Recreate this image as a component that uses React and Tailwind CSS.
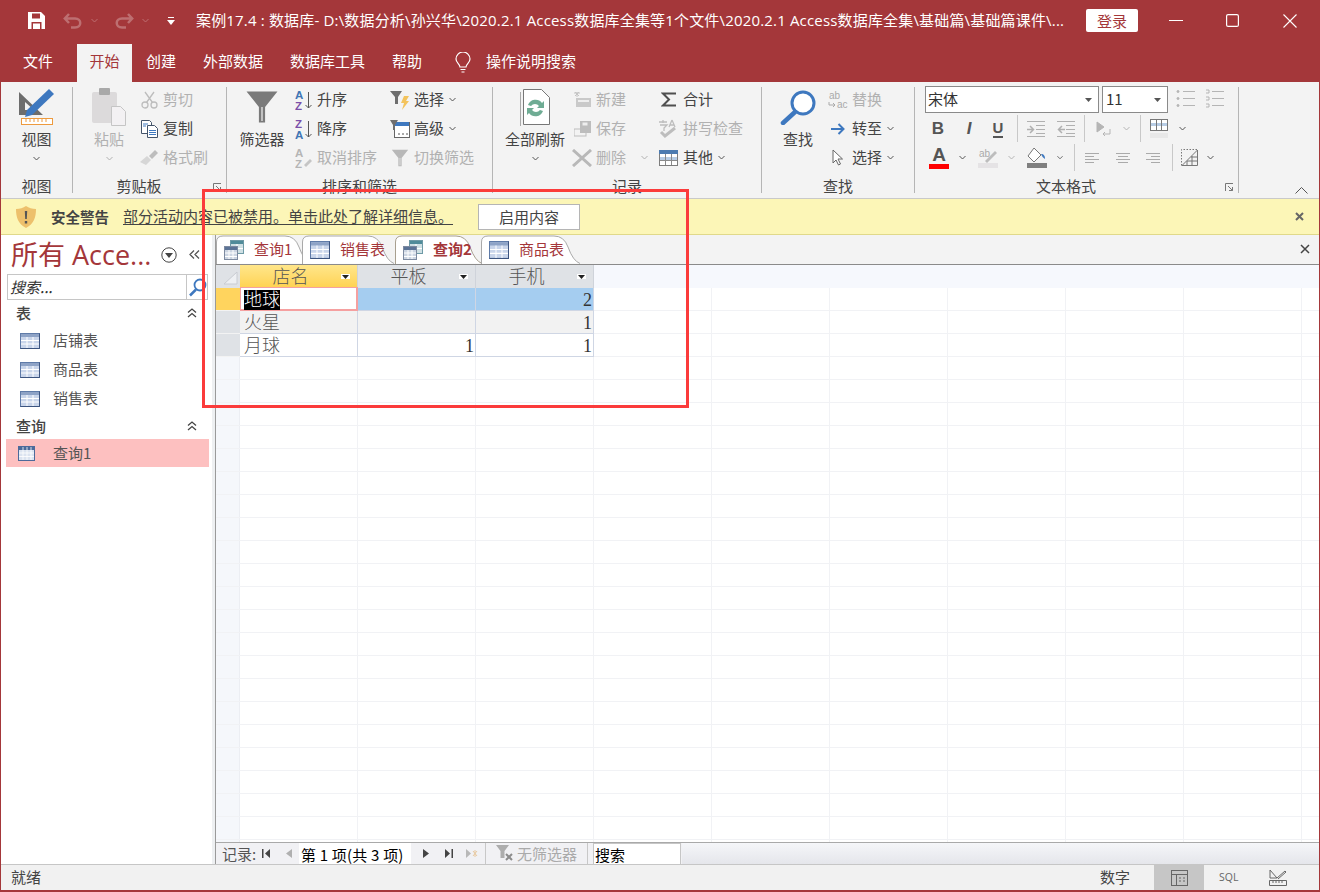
import React from 'react';

const RED = '#a4373a';

const Chev = ({ color = '#555' }) => (
  <svg width="7" height="5" viewBox="0 0 7 5" fill="none" stroke={color} strokeWidth="1"><path d="M.5 1 3.5 4 6.5 1" /></svg>
);

const TableIcon = ({ w = 20, h = 16 }) => (
  <svg width={w} height={h} viewBox="0 0 20 16" preserveAspectRatio="none">
    <rect x=".5" y=".5" width="19" height="15" fill="#c9d5ea" stroke="#5f7ba8" />
    <rect x="1" y="1" width="18" height="3" fill="#8ea3c6" />
    <path d="M1 7.500h18M1 11h18M7 4v11M13 4v11" stroke="#fff" strokeWidth="1" />
    <path d="M.5 15.500h19v-15" fill="none" stroke="#3d5580" />
  </svg>
);

const QueryNavIcon = () => (
  <svg width="17" height="15" viewBox="0 0 17 15">
    <rect x=".5" y=".5" width="16" height="14" fill="#dbe3f0" stroke="#4d6a9a" />
    <rect x="1" y="1" width="15" height="3" fill="#4d6a9a" />
    <path d="M1 7h15M1 10.500h15M5 1v13M9 1v13M13 1v13" stroke="#fff" strokeWidth=".8" />
  </svg>
);

const QueryIcon = () => (
  <svg width="20" height="20" viewBox="0 0 20 20">
    <rect x="6.500" y=".5" width="13" height="13" fill="#cfe0e4" stroke="#6e9aa6" />
    <rect x="7" y="1" width="12" height="3" fill="#4f8b99" />
    <path d="M13 4v9M7 8.500h12" stroke="#fff" />
    <rect x=".5" y="6.500" width="13" height="13" fill="#ccd5e2" stroke="#7d8aa0" />
    <rect x="1" y="7" width="12" height="3" fill="#5b7396" />
    <path d="M1 13h12M1 16.500h12M5 10v9M9 10v9" stroke="#fff" />
  </svg>
);

const Funnel = ({ size = 22, color = '#7a7a7a' }) => (
  <svg width={size} height={size} viewBox="0 0 22 22">
    <path d="M1 1h20L13 11v10H9V11Z" fill={color} />
    <path d="M11 11v9" stroke="#fff" strokeWidth="1" opacity=".7" />
  </svg>
);

const AzIcon = ({ down, gray }) => (
  <svg width="18" height="20" viewBox="0 0 18 20" fontFamily="Liberation Sans" fontSize="11.500" fontWeight="700">
    <text x="0" y="9" fill={gray ? '#b5b5b5' : down ? '#7a4fa8' : '#3f76b4'}>{down ? 'Z' : 'A'}</text>
    <text x="0" y="19.500" fill={gray ? '#b5b5b5' : down ? '#3f76b4' : '#7a4fa8'}>{down ? 'A' : 'Z'}</text>
    {gray
      ? <path d="M9 17l6-6 2 2-6 6Z" fill="#c5c5c5" />
      : <path d="M13.500 2v16M10.500 15l3 3 3-3" fill="none" stroke="#555" strokeWidth="1" />}
  </svg>
);

const ListLines = ({ kind }) => (
  <svg width="16" height="14" viewBox="0 0 16 14" stroke="#aaa" fill="none">
    {kind === 'left' && <path d="M0 2.500h14M0 5.500h9M0 8.500h14M0 11.500h9" />}
    {kind === 'center' && <path d="M1 2.500h14M3 5.500h10M1 8.500h14M3 11.500h10" />}
    {kind === 'right' && <path d="M1 2.500h14M6 5.500h9M1 8.500h14M6 11.500h9" />}
  </svg>
);

const IndentIcon = ({ out }) => (
  <svg width="18" height="16" viewBox="0 0 18 16" fill="none" stroke="#b0b0b0">
    <path d="M0 .5h18M9 4.500h9M9 8.500h9M9 12.500h9M0 15.500h18" />
    <path d={out ? 'M8 8.500H2M5 5 1.500 8.500 5 12' : 'M0 8.500h6M3 5l3.500 3.500L3 12'} strokeWidth="1.500" />
  </svg>
);

const Small = ({ icon, label, gray, chev, iconW = 20, gap = 4, chevGap = 6 }) => (
  <div className="flex h-[29px] items-center">
    <div className="flex shrink-0 items-center justify-center" style={{ width: iconW, marginRight: gap }}>{icon}</div>
    <span className={`whitespace-nowrap text-[15px] ${gray ? 'text-[#b1b1b1]' : 'text-[#444]'}`}>{label}</span>
    {chev && <span className="flex" style={{ marginLeft: chevGap }}><Chev color={gray ? '#b1b1b1' : '#555'} /></span>}
  </div>
);

const Big = ({ icon, label, gray, chev, w, ml }) => (
  <div className="flex shrink-0 flex-col items-center" style={{ width: w, marginLeft: ml }}>
    <div className="flex h-[44px] w-full items-center justify-center">{icon}</div>
    <span className={`h-[20px] whitespace-nowrap text-[15px] leading-[20px] ${gray ? 'text-[#b1b1b1]' : 'text-[#444]'}`}>{label}</span>
    {chev && <span className="mt-[7px] flex"><Chev color={gray ? '#b1b1b1' : '#555'} /></span>}
  </div>
);

const Launcher = () => (
  <svg className="absolute bottom-[6px] right-[4px]" width="9" height="9" viewBox="0 0 9 9" fill="none" stroke="#777">
    <path d="M.5 8V.5H8M3 3l4.500 4.500M4 7.500h3.500V4" />
  </svg>
);

const Group = ({ w, label, launcher, children }) => (
  <div className="relative flex h-full shrink-0 flex-col" style={{ width: w }}>
    <div className="flex h-[97px] pt-[3px]">{children}</div>
    <div className={`text-center text-[15px] leading-[14px] text-[#444] ${launcher ? 'pr-[21px]' : ''}`}>{label}</div>
    {launcher && <Launcher />}
  </div>
);

const Sep = () => <div className="mt-[5px] h-[106px] w-px shrink-0 bg-[#b5b5b5]" />;
const MiniSep = ({ ml }) => <div className="h-[27px] w-px shrink-0 bg-[#c8c8c8]" style={{ marginLeft: ml }} />;
const Cell = ({ w, children }) => <div className="flex shrink-0 items-center justify-center" style={{ width: w }}>{children}</div>;

const TitleBar = () => (
  <div className="flex h-[41px] items-center text-white">
    <svg className="ml-[27px]" width="17" height="17" viewBox="0 0 17 17">
      <path d="M0 0h13l4 4v13H0Z" fill="#fff" />
      <rect x="4" y="1.500" width="8" height="5" fill={RED} />
      <rect x="3.500" y="10" width="10" height="7" fill={RED} />
      <rect x="5" y="11.500" width="7" height="5.500" fill="#fff" />
    </svg>
    <svg className="ml-[18px]" width="20" height="16" viewBox="0 0 20 16" fill="none" stroke="#bd6f71" strokeWidth="2.500">
      <path d="M6 1 1.800 5.500 6 10M2 5.500h10c7 0 7 9 0 9H8" />
    </svg>
    <span className="ml-[8px] flex"><Chev color="#bd6f71" /></span>
    <svg className="ml-[16px]" width="20" height="16" viewBox="0 0 20 16" fill="none" stroke="#bd6f71" strokeWidth="2.500">
      <path d="M14 1l4.200 4.500L14 10M18 5.500H8c-7 0-7 9 0 9h4" />
    </svg>
    <span className="ml-[8px] flex"><Chev color="#bd6f71" /></span>
    <svg className="ml-[18px]" width="8" height="8" viewBox="0 0 8 8" fill="#fff">
      <rect x="1" y="0" width="6" height="1" />
      <path d="M0 3h8L4 8Z" />
    </svg>
    <span className="ml-[21px] w-[880px] whitespace-nowrap text-[15px] tracking-[0.17px] font-['Open_Sans','Noto_Sans_CJK_SC',sans-serif]">
      案例17.4 : 数据库- D:\数据分析\孙兴华\2020.2.1 Access数据库全集等1个文件\2020.2.1 Access数据库全集\基础篇\基础篇课件\...
    </span>
    <button className="ml-[10px] h-[23px] w-[52px] rounded-[2px] bg-white text-[15px] leading-[23px] text-[#a4373a]">登录</button>
    <svg className="ml-[31px]" width="14" height="14" viewBox="0 0 14 14" stroke="#fff"><path d="M0 6.500h14" /></svg>
    <svg className="ml-[43px]" width="13" height="13" viewBox="0 0 13 13" fill="none" stroke="#fff" strokeWidth="1.200"><rect x=".6" y=".6" width="11.800" height="11.800" rx="1.500" /></svg>
    <svg className="ml-[44px]" width="14" height="14" viewBox="0 0 14 14" stroke="#fff" strokeWidth="1.100"><path d="M.5.5l13 13M13.500.5l-13 13" /></svg>
  </div>
);

const MenuBar = () => (
  <div className="flex h-[41px] text-[15px] text-white">
    <span className="ml-[22px] mt-[9px]">文件</span>
    <span className="ml-[24px] mt-[3px] h-[38px] w-[55px] bg-[#f3f3f3] pt-[6px] text-center text-[#a4373a]">开始</span>
    <span className="ml-[14px] mt-[9px]">创建</span>
    <span className="ml-[27px] mt-[9px]">外部数据</span>
    <span className="ml-[27px] mt-[9px]">数据库工具</span>
    <span className="ml-[27px] mt-[9px]">帮助</span>
    <svg className="ml-[33px] mt-[11px]" width="16" height="21" viewBox="0 0 16 21" fill="none" stroke="#fff" strokeWidth="1.200">
      <path d="M5 15c0-3-4-4-4-8a7 7 0 0 1 14 0c0 4-4 5-4 8ZM5.500 17.500h5M6.500 20h3" />
    </svg>
    <span className="ml-[15px] mt-[9px]">操作说明搜索</span>
  </div>
);

const Ribbon = () => (
  <div className="flex h-[116px] bg-[#f3f3f3]">
    <Group w={71} label="视图">
      <Big w={71} ml={0} chev label="视图" icon={
        <svg width="37" height="38" viewBox="0 0 37 38">
          <path d="M1 4l24 23H1Z M7 14v8h9Z" fill="#6d6d6d" fillRule="evenodd" />
          <path d="M31 1l5 5L14 27l-7 2 2-7Z" fill="#3e78bf" />
          <rect x="3.500" y="30.500" width="31" height="6" fill="#fff" stroke="#ed9a3e" />
          <path d="M8 31v3M12 31v3M16 31v3M20 31v3M24 31v3M28 31v3" stroke="#ed9a3e" />
        </svg>
      } />
    </Group>
    <Sep />
    <Group w={153} label="剪贴板" launcher>
      <Big w={62} ml={5} gray chev label="粘贴" icon={
        <svg width="34" height="38" viewBox="0 0 34 38">
          <rect x="0" y="4" width="25" height="31" rx="2" fill="#dcdadb" />
          <rect x="7" y="0" width="11" height="7" rx="1" fill="#a9a9a9" />
          <path d="M19.500 18.500h9l5 5v14h-14Z" fill="#f3f1f3" stroke="#c5c5c5" />
        </svg>
      } />
      <div>
        <Small iconW={18} gap={5} gray label="剪切" icon={
          <svg width="17" height="18" viewBox="0 0 17 18" fill="none" stroke="#bdbdbd" strokeWidth="1.300">
            <circle cx="4" cy="14" r="3" /><circle cx="13" cy="14" r="3" /><path d="M5.500 11.500 13 1M11.500 11.500 4 1" />
          </svg>
        } />
        <Small iconW={18} gap={5} label="复制" icon={
          <svg width="17" height="18" viewBox="0 0 17 18" fill="#fff" stroke="#44546a">
            <path d="M.5.500h8l2 2v11H.5Z" /><path d="M6.500 5.500h7l3 3v9h-10Z" />
            <path d="M8 10.500h7M8 12.500h7M8 14.500h7M2 4h5M2 6h3" stroke="#3e78bf" />
          </svg>
        } />
        <Small iconW={18} gap={5} gray label="格式刷" icon={
          <svg width="18" height="16" viewBox="0 0 18 16">
            <path d="M0 12 7 6l4 4-5 5Z" fill="#d6d6d6" /><path d="M9 6l6-6 3 3-6 6Z" fill="#bdbdbd" />
          </svg>
        } />
      </div>
    </Group>
    <Sep />
    <Group w={265} label="排序和筛选">
      <Big w={60} ml={5} label="筛选器" icon={<Funnel size={34} />} />
      <div className="ml-[3px] w-[95px]">
        <Small iconW={18} label="升序" icon={<AzIcon />} />
        <Small iconW={18} label="降序" icon={<AzIcon down />} />
        <Small iconW={18} gray label="取消排序" icon={<AzIcon gray />} />
      </div>
      <div>
        <Small chev chevGap={5} label="选择" icon={
          <svg width="20" height="20" viewBox="0 0 20 20">
            <path d="M0 1h12L8 7v7H5V7Z" fill="#6e6e6e" /><path d="M14 6h5l-3 5h3l-7 9 2-7h-3Z" fill="#f3c35c" />
          </svg>
        } />
        <Small chev chevGap={5} label="高级" icon={
          <svg width="20" height="20" viewBox="0 0 20 20">
            <rect x="4.500" y="3.500" width="15" height="15" fill="#fff" stroke="#666" />
            <rect x="5" y="3" width="14" height="4" fill="#3e78bf" />
            <path d="M0 1h8L5 6v5H3V6Z" fill="#6e6e6e" /><path d="M8 15h2M12 15h2M16 15h2" stroke="#555" />
          </svg>
        } />
        <Small gray label="切换筛选" icon={<Funnel size={18} color="#b8b8b8" />} />
      </div>
    </Group>
    <Sep />
    <Group w={268} label="记录">
      <Big w={60} ml={12} chev label="全部刷新" icon={
        <svg width="30" height="37" viewBox="0 0 30 37">
          <path d="M3.500.5h18l8 8v27h-26Z" fill="#fff" stroke="#777" /><path d="M.5 3v34" stroke="#aaa" />
          <path d="M8 16a8 8 0 0 1 14-2l2-2v7h-7l2-2a5 5 0 0 0-8 0Z M23 22a8 8 0 0 1-14 2l-2 2v-7h7l-2 2a5 5 0 0 0 8 0Z" fill="#6fac94" />
        </svg>
      } />
      <div className="ml-[7px] w-[86px]">
        <Small gray label="新建" icon={
          <svg width="17" height="15" viewBox="0 0 17 15"><rect x="2" y="6" width="15" height="9" fill="#c9c9c9" /><rect x="4" y="8" width="11" height="2" fill="#eee" /><path d="M0 1h6M3-1v6M1 0l4 4M5 0 1 4" stroke="#c4c4c4" /></svg>
        } />
        <Small gray label="保存" icon={
          <svg width="17" height="16" viewBox="0 0 17 16"><rect x="0" y="8" width="12" height="7" fill="none" stroke="#bdbdbd" /><rect x="6" y="0" width="11" height="12" fill="#bdbdbd" /><rect x="8.500" y="1.500" width="5" height="3" fill="#eee" /></svg>
        } />
        <Small gray chev chevGap={15} label="删除" icon={
          <svg width="20" height="18" viewBox="0 0 20 18" stroke="#b8b8b8" strokeWidth="3"><path d="M1 1l18 16M19 1 1 17" /></svg>
        } />
      </div>
      <div>
        <Small gap={5} label="合计" icon={
          <svg width="15" height="15" viewBox="0 0 15 15" fill="none" stroke="#4f4f4f" strokeWidth="2"><path d="M15 1.500H2L8 7.500 2 13.500h13" /></svg>
        } />
        <Small gap={5} gray label="拼写检查" icon={
          <svg width="20" height="19" viewBox="0 0 20 19" fill="none" stroke="#bdbdbd" strokeWidth="1.300">
            <path d="M1 3h8M5 1v3M2 6h7L6 9v3M14 1l-3 7M14 1l3 7M12 6h4" /><path d="M3 13l4 4 10-8" strokeWidth="3" />
          </svg>
        } />
        <Small gap={5} chev chevGap={5} label="其他" icon={
          <svg width="19" height="16" viewBox="0 0 19 16">
            <rect x=".5" y=".5" width="18" height="15" fill="#fff" stroke="#7d7d7d" /><rect x="0" y="0" width="19" height="4" fill="#4d7bb0" />
            <rect x="1" y="7" width="17" height="3" fill="#b7cce4" /><path d="M1 10.500h17M6.500 4v11M12.500 4v11" stroke="#8a8a8a" />
          </svg>
        } />
      </div>
    </Group>
    <Sep />
    <Group w={152} label="查找">
      <Big w={50} ml={11} label="查找" icon={
        <svg width="36" height="35" viewBox="0 0 36 35" fill="none">
          <circle cx="23" cy="13" r="11" stroke="#3e78bf" strokeWidth="3" fill="#fff" /><path d="M15 22 3 33" stroke="#3e78bf" strokeWidth="4.500" strokeLinecap="round" />
        </svg>
      } />
      <div className="ml-[5px]">
        <Small gray label="替换" icon={
          <svg width="20" height="18" viewBox="0 0 20 18" fontFamily="Liberation Sans" fontSize="10" fill="#aaa"><text x="1" y="8">ab</text><text x="9" y="17">ac</text><path d="M1 11v3h6M5 12l2 2-2 2" fill="none" stroke="#aaa" /></svg>
        } />
        <Small chev chevGap={5} label="转至" icon={
          <svg width="14" height="12" viewBox="0 0 14 12" fill="none" stroke="#3e78bf" strokeWidth="2"><path d="M0 6h12M7.500 1l5 5-5 5" /></svg>
        } />
        <Small chev chevGap={5} label="选择" icon={
          <svg width="12" height="17" viewBox="0 0 12 17" fill="#fff" stroke="#666"><path d="M1 1v13l3-3 2.500 5 2-1-2.500-5h4.500Z" /></svg>
        } />
      </div>
    </Group>
    <Sep />
    <Group w={323} label="文本格式" launcher>
      <div className="pl-[10px]">
        <div className="flex h-[29px] items-start pt-px">
          <div className="flex h-[27px] w-[174px] items-center justify-between border border-[#8a8a8a] bg-white pl-[2px] pr-[6px] text-[15px] text-[#333]">
            <span>宋体</span><svg width="7" height="4" viewBox="0 0 7 4" fill="#555"><path d="M0 0h7L3.500 4Z" /></svg>
          </div>
          <div className="ml-[3px] flex h-[27px] w-[66px] items-center justify-between border border-[#8a8a8a] bg-white pl-[3px] pr-[6px] text-[15px] text-[#333]">
            <span>11</span><svg width="7" height="4" viewBox="0 0 7 4" fill="#555"><path d="M0 0h7L3.500 4Z" /></svg>
          </div>
          <svg className="ml-[8px] mt-[3px]" width="20" height="20" viewBox="0 0 20 20" stroke="#b5b5b5" fill="#b5b5b5">
            <path d="M7 2.500h12M7 9.500h12M7 16.500h12" /><circle cx="2" cy="2.500" r="1" /><circle cx="2" cy="9.500" r="1" /><circle cx="2" cy="16.500" r="1" />
          </svg>
          <svg className="ml-[9px] mt-[3px]" width="20" height="20" viewBox="0 0 20 20" stroke="#b5b5b5" fill="none">
            <path d="M7 2.500h12M7 9.500h12M7 16.500h12M1 1h3v3H1M1 8h3v3H1M1 15h3v3H1" />
          </svg>
        </div>
        <div className="flex h-[29px] items-center text-[#555]">
          <Cell w={26}><span className="text-[17px] font-bold font-['Liberation_Sans',sans-serif]">B</span></Cell>
          <Cell w={36}><span className="text-[17px] font-bold italic font-['Liberation_Sans',sans-serif]">I</span></Cell>
          <Cell w={22}><span className="border-b-2 border-[#555] text-[15px] font-bold leading-[17px] font-['Liberation_Sans',sans-serif]">U</span></Cell>
          <MiniSep ml={8} />
          <Cell w={36}><IndentIcon /></Cell>
          <Cell w={24}><IndentIcon out /></Cell>
          <MiniSep ml={6} />
          <Cell w={36}>
            <svg width="15" height="16" viewBox="0 0 15 16" fill="none" stroke="#b5b5b5"><path d="M1 1l7 5-7 5Z" fill="#b5b5b5" /><path d="M14 8v5H7M9 11l-2 2 2 2" /></svg>
          </Cell>
          <Cell w={10}><Chev color="#b5b5b5" /></Cell>
          <MiniSep ml={9} />
          <Cell w={36}>
            <svg width="18" height="19" viewBox="0 0 18 19" fill="none"><rect x=".5" y=".5" width="17" height="11" fill="#fff" stroke="#777" /><rect x="1" y="4" width="16" height="3" fill="#b7cce4" /><path d="M6.500 1v10M11.500 1v10" stroke="#777" /><rect x="0" y="14" width="18" height="5" fill="#e8e8e8" /></svg>
          </Cell>
          <Cell w={10}><Chev /></Cell>
        </div>
        <div className="flex h-[29px] items-center">
          <Cell w={28}>
            <div className="flex flex-col items-center">
              <span className="text-[19px] font-bold leading-[16px] text-[#555] font-['Liberation_Sans',sans-serif]">A</span>
              <div className="mt-[1px] h-[5px] w-[20px] bg-[#ff0000]" />
            </div>
          </Cell>
          <Cell w={18}><Chev /></Cell>
          <Cell w={34}>
            <svg width="20" height="20" viewBox="0 0 20 20" fontFamily="Liberation Sans" fontSize="10" fill="#aaa"><text x="1" y="9">ab</text><path d="M7 13 17 3l2 2L9 15Z" fill="#bdbdbd" /><rect x="0" y="15" width="20" height="5" fill="#e5e3e5" /></svg>
          </Cell>
          <Cell w={12}><Chev color="#b5b5b5" /></Cell>
          <Cell w={40}>
            <svg width="20" height="21" viewBox="0 0 20 21"><path d="M7 1 1 9l6 6 7-7Z" fill="#fff" stroke="#777" /><path d="M14 7c3 0 4 2 4 5-2-1-3-3-4-5Z" fill="#3e78bf" /><rect x="0" y="16" width="20" height="5" fill="#7f7f7f" /></svg>
          </Cell>
          <Cell w={6}><Chev /></Cell>
          <MiniSep ml={11} />
          <Cell w={36}><ListLines kind="left" /></Cell>
          <Cell w={24}><ListLines kind="center" /></Cell>
          <Cell w={36}><ListLines kind="right" /></Cell>
          <MiniSep ml={1} />
          <Cell w={32}>
            <svg width="17" height="17" viewBox="0 0 17 17" fill="none" stroke="#777"><path d="M.5 16.500v-16h16" strokeDasharray="1.500 1.500" /><path d="M16.500 1 1 16.500M16.500 1v15.500H1M6 12h10M10 8h6M11 7v9M6 12v4" /></svg>
          </Cell>
          <Cell w={10}><Chev /></Cell>
        </div>
      </div>
    </Group>
    <Sep />
    <div className="flex flex-1 items-end justify-end pb-[4px] pr-[11px]">
      <svg width="13" height="7" viewBox="0 0 13 7" fill="none" stroke="#555"><path d="M.5 6.500 6.500.5l6 6" /></svg>
    </div>
  </div>
);

const WarningBar = () => (
  <div className="flex h-[36px] items-center border-b border-[#e0d98a] bg-[#fcf6b7] text-[15px] text-[#444]">
    <svg className="ml-[15px]" width="20" height="22" viewBox="0 0 20 22">
      <path d="M10 0c3 2 6 3 10 3 0 8-2 15-10 19C2 18 0 11 0 3c4 0 7-1 10-3Z" fill="#edc06c" />
      <path d="M8.800 5h2.400l-.4 8H9.200ZM8.800 15h2.400v2.400H8.800Z" fill="#555" />
    </svg>
    <span className="ml-[15px] w-[72px] text-[14.500px] font-bold">安全警告</span>
    <span className="w-[355px] underline underline-offset-2">部分活动内容已被禁用。单击此处了解详细信息。</span>
    <button className="h-[26px] w-[102px] border border-[#b5b5b5] bg-white text-[15px] leading-[24px]">启用内容</button>
    <svg className="ml-auto mr-[15px]" width="9" height="9" viewBox="0 0 9 9" stroke="#666" strokeWidth="2"><path d="M1 1l7 7M8 1 1 8" /></svg>
  </div>
);

const NavHeading = ({ label }) => (
  <div className="flex h-[26px] items-center justify-between pl-[15px] pr-[15px]">
    <span className="text-[15px] font-medium text-[#444]">{label}</span>
    <svg width="10" height="10" viewBox="0 0 10 10" fill="none" stroke="#444" strokeWidth="1.300"><path d="M1 4.500l4-3.500 4 3.500M1 9l4-3.500L9 9" /></svg>
  </div>
);

const NavItem = ({ label, icon, active }) => (
  <div className={`ml-[5px] mr-[3px] flex items-center ${active ? 'h-[28px] bg-[#fdc0c0]' : 'h-[29px]'}`}>
    <div className={`flex w-[47px] shrink-0 ${active ? 'pl-[12px]' : 'pl-[14px]'}`}>{icon}</div>
    <span className="text-[15px] text-[#555]">{label}</span>
  </div>
);

const Nav = () => (
  <div className="w-[211px] shrink-0 bg-white">
    <div className="flex h-[39px] items-center pl-[10px]">
      <span className="w-[148px] whitespace-nowrap text-[27px] leading-[36px] text-[#a4373a] font-['Open_Sans','Noto_Sans_CJK_SC',sans-serif]">所有 Acce...</span>
      <svg className="ml-[2px]" width="16" height="16" viewBox="0 0 16 16" fill="none" stroke="#444"><circle cx="8" cy="8" r="7.200" /><path d="M4 6h8l-4 5Z" fill="#444" stroke="none" /></svg>
      <svg className="ml-[12px]" width="11" height="9" viewBox="0 0 11 9" fill="none" stroke="#555" strokeWidth="1.300"><path d="M5 .5 1 4.500l4 4M10 .5 6 4.500l4 4" /></svg>
    </div>
    <div className="ml-[6px] flex h-[26px] w-[201px] border border-[#c6c6c6]">
      <span className="flex-1 pl-[2px] text-[15px] italic leading-[24px] text-[#333]">搜索...</span>
      <div className="flex w-[21px] items-center justify-center border-l border-[#c6c6c6]">
        <svg width="19" height="19" viewBox="0 0 19 19" fill="none"><circle cx="12" cy="7" r="5.500" stroke="#3e78bf" strokeWidth="1.800" /><path d="M8 11.500 2 17.500" stroke="#3e78bf" strokeWidth="2.500" /></svg>
      </div>
    </div>
    <NavHeading label="表" />
    <NavItem label="店铺表" icon={<TableIcon />} />
    <NavItem label="商品表" icon={<TableIcon />} />
    <NavItem label="销售表" icon={<TableIcon />} />
    <NavHeading label="查询" />
    <NavItem active label="查询1" icon={<QueryNavIcon />} />
  </div>
);

const Tab = ({ w, label, ml, active }) => (
  <div className="relative flex h-[29px] shrink-0 items-center pl-[8px]" style={{ width: w, marginLeft: ml }}>
    <svg className="absolute left-0 top-0" width={w} height="29" viewBox={`0 0 ${w} 29`}>
      <path d={`M.5 29V7Q.5 1 7 1H${w - 26}Q${w - 16} 1 ${w - 12} 12Q${w - 7} 26 ${w} 28.500`} fill="#fff" stroke={active ? '#a89f8f' : '#a9a9a9'} />
    </svg>
    <span className="relative flex items-center">
      {label.startsWith('查询') ? <QueryIcon /> : <TableIcon h={18} />}
      <span className={`ml-[10px] whitespace-nowrap text-[15px] text-[#a4373a] ${active ? 'font-bold' : ''}`}>{label}</span>
    </span>
  </div>
);

const columns = ['店名', '平板', '手机'];
const sheetRows = [
  { name: '地球', pad: '', phone: '2' },
  { name: '火星', pad: '', phone: '1' },
  { name: '月球', pad: '1', phone: '1' },
];
const blankCols = Array.from({ length: 7 });
const blankRows = Array.from({ length: 24 });

const HeaderCell = ({ label, active }) => (
  <div className={`relative h-[23px] w-[118px] shrink-0 border-r border-[#cfd3da] pr-[16px] text-center text-[18px] leading-[25px] text-[#555] ${active ? 'bg-gradient-to-b from-[#ffe68a] to-[#ffd24f]' : 'bg-[#dfe2e6]'}`}>
    {label}
    <span className="absolute right-[7px] top-[9px] flex h-[5px] w-[9px] items-center justify-center bg-white">
      <svg width="7" height="4" viewBox="0 0 7 4" fill="#222"><path d="M0 0h7L3.500 4Z" /></svg>
    </span>
  </div>
);

const Sheet = () => (
  <div className="flex-1 overflow-hidden bg-white font-['Liberation_Serif','Noto_Sans_CJK_SC',serif] font-light">
    <div className="flex h-[23px]">
      <div className="flex h-[23px] w-[24px] shrink-0 items-end justify-end bg-[#dfe2e6] pb-[3px] pr-[2px]">
        <svg width="15" height="14" viewBox="0 0 15 14" fill="#eef0f3" stroke="#c9ccd2"><path d="M14 1v12H1Z" /></svg>
      </div>
      {columns.map((c, i) => <HeaderCell key={c} label={c} active={i === 0} />)}
      <div className="flex-1 bg-[#f6f8fd]" />
    </div>
    {sheetRows.map((r, i) => (
      <div key={r.name} className="flex h-[23px]">
        <div className={`w-[24px] shrink-0 border-b border-[#f3f3f3] ${i === 0 ? 'bg-[#ffd45e]' : 'bg-[#dfe2e6]'}`} />
        <div className={`relative h-[23px] w-[118px] shrink-0 border-b border-r border-[#cfd6e4] pl-[4px] text-[18px] leading-[25px] text-[#555] ${i === 1 ? 'bg-[#f2f2f2]' : 'bg-white'}`}>
          {i === 0 && <div className="absolute -top-px bottom-[-1px] left-0 right-[-1px] border-b-2 border-l border-r-2 border-t border-[#f5a0a0]" />}
          <span className={i === 0 ? 'relative bg-black text-white' : ''}>{r.name}</span>
        </div>
        <div className={`h-[23px] w-[118px] shrink-0 border-b border-r border-[#cfd6e4] pr-[1px] text-right text-[18px] leading-[25px] text-[#333] ${i === 0 ? 'bg-[#a5cdf0]' : i === 1 ? 'bg-[#f2f2f2]' : 'bg-white'}`}>{r.pad}</div>
        <div className={`h-[23px] w-[118px] shrink-0 border-b border-r border-[#cfd6e4] pr-[1px] text-right text-[18px] leading-[25px] text-[#333] ${i === 0 ? 'bg-[#a5cdf0]' : i === 1 ? 'bg-[#f2f2f2]' : 'bg-white'}`}>{r.phone}</div>
        <div className="flex flex-1 border-b border-[#f1f2f5]">
          {blankCols.map((_, j) => <div key={j} className="h-full w-[118px] shrink-0 border-r border-[#f1f2f5]" />)}
        </div>
      </div>
    ))}
    {blankRows.map((_, i) => (
      <div key={i} className="flex h-[23px] border-b border-[#f1f2f5]">
        <div className="w-[24px] shrink-0 border-r border-[#eceef3] bg-[#f5f7fb]" />
        {columns.map((c) => <div key={c} className="w-[118px] shrink-0 border-r border-[#f1f2f5]" />)}
        {blankCols.map((__, j) => <div key={j} className="w-[118px] shrink-0 border-r border-[#f1f2f5]" />)}
      </div>
    ))}
  </div>
);

const RecordNav = () => (
  <div className="flex h-[22px] items-center overflow-hidden border-t border-[#a9a9a9] bg-[#f1f1f4] text-[15px] text-[#555]">
    <span className="ml-[6px] w-[40px] leading-[24px]">记录:</span>
    <svg width="8" height="9" viewBox="0 0 8 9" fill="#444"><path d="M0 0h1.500v9H0ZM8 0v9L3 4.500Z" /></svg>
    <svg className="ml-[16px]" width="6" height="9" viewBox="0 0 6 9" fill="#b0b0b0"><path d="M6 0v9L0 4.500Z" /></svg>
    <div className="ml-[7px] h-[21px] w-[112px] shrink-0 whitespace-nowrap bg-white pl-[2px] leading-[23px] tracking-[0.2px] text-black">第 1 项(共 3 项)</div>
    <svg className="ml-[12px]" width="6" height="9" viewBox="0 0 6 9" fill="#444"><path d="M0 0v9l6-4.500Z" /></svg>
    <svg className="ml-[16px]" width="8" height="9" viewBox="0 0 8 9" fill="#444"><path d="M0 0v9l5-4.500ZM6.500 0H8v9H6.500Z" /></svg>
    <svg className="ml-[13px]" width="12" height="9" viewBox="0 0 12 9"><path d="M0 0v9l5-4.500Z" fill="#b8b8b8" /><path d="M7 2l4 5M11 2 7 7M9 1v7" stroke="#e8c9a0" /></svg>
    <div className="ml-[7px] h-full w-px bg-[#c8c8c8]" />
    <svg className="ml-[10px]" width="20" height="18" viewBox="0 0 20 18"><path d="M0 0h13L8.500 6v7h-4V6Z" fill="#adadad" /><path d="M10 9l6 6M16 9l-6 6" stroke="#8c8c8c" strokeWidth="2" /></svg>
    <span className="ml-[1px] w-[70px] whitespace-nowrap leading-[24px] text-[#aaa]">无筛选器</span>
    <div className="h-full w-px bg-[#c8c8c8]" />
    <div className="ml-[5px] h-[21px] w-[88px] shrink-0 border-l border-r border-t border-[#c6c6c6] bg-white pl-[1px] leading-[22px] text-black">搜索</div>
    <div className="ml-px h-full flex-1 bg-gradient-to-b from-[#f5f6f9] to-[#e5e6eb]" />
  </div>
);

const Content = () => (
  <div className="flex min-w-0 flex-1 flex-col">
    <div className="flex h-[30px] shrink-0 items-end justify-between border-b border-[#8a8a8a] bg-[#f3f3f3]">
      <div className="flex">
        <Tab w={95} ml={0} label="查询1" />
        <Tab w={92} ml={-9} label="销售表" />
        <Tab w={87} ml={1} label="查询2" active />
        <Tab w={99} ml={-1} label="商品表" />
      </div>
      <svg className="mb-[10px] mr-[9px]" width="10" height="10" viewBox="0 0 10 10" stroke="#444" strokeWidth="1.500"><path d="M1 1l8 8M9 1 1 9" /></svg>
    </div>
    <Sheet />
    <RecordNav />
  </div>
);

const StatusBar = () => (
  <div className="flex h-[26px] items-center border-t border-[#c6c6c6] bg-[#f1f1f1] text-[15px] text-[#444]">
    <span className="ml-[10px]">就绪</span>
    <span className="ml-auto">数字</span>
    <div className="ml-[24px] flex h-full w-[50px] items-center justify-center bg-[#c6c6c6]">
      <svg width="17" height="16" viewBox="0 0 17 16" fill="none" stroke="#666"><rect x=".5" y=".5" width="16" height="15" /><path d="M.5 4.500h16M5.500 4.500v11M8 8h2M12 8h2M8 11h2M12 11h2" /></svg>
    </div>
    <span className="ml-[15px] w-[20px] text-[10.500px] text-[#666] font-['Open_Sans',sans-serif]">SQL</span>
    <svg className="ml-[30px]" width="18" height="17" viewBox="0 0 18 17" fill="none" stroke="#666"><path d="M1 1v8h7ZM8 9l8-7 1 1-8 7" /><path d="M.5 11.500h17v5H.5ZM4 12v2M7 12v2M10 12v2M13 12v2" /></svg>
    <div className="w-[32px]" />
  </div>
);

export default function App() {
  return (
    <div className="relative flex h-[892px] w-[1320px] flex-col overflow-hidden border-x border-b-2 border-[#a4373a] bg-white font-['Noto_Sans_CJK_SC',sans-serif]">
      <div className="bg-[#a4373a]">
        <TitleBar />
        <MenuBar />
      </div>
      <Ribbon />
      <div className="h-px bg-[#c9c9c9]" />
      <WarningBar />
      <div className="flex min-h-0 flex-1">
        <Nav />
        <div className="w-[4px] shrink-0 border-r border-[#9a9a9a] bg-[#eef0f2]" />
        <Content />
      </div>
      <StatusBar />
      <div className="pointer-events-none absolute left-[201px] top-[189px] h-[219px] w-[487px] border-[3px] border-[#fb3b3b]" />
    </div>
  );
}
